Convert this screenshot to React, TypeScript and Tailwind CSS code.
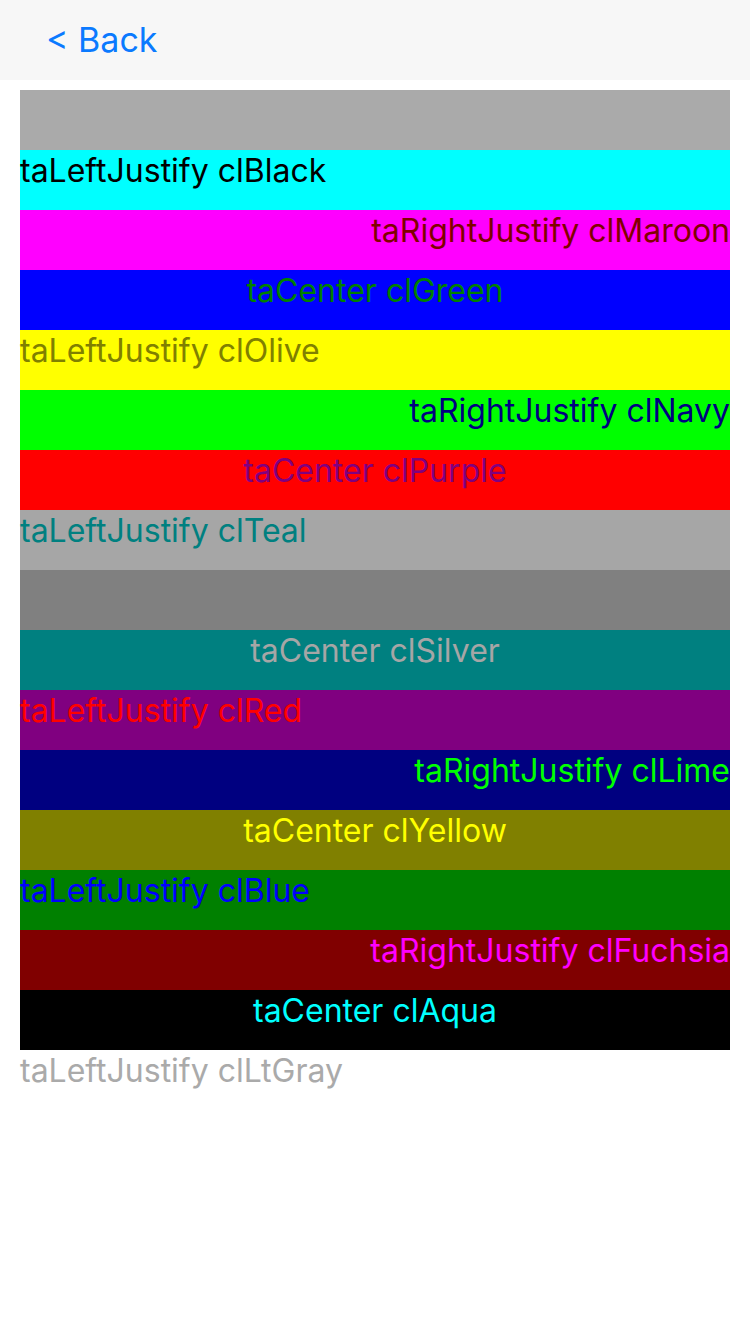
const rows: { bg: string; fg: string; align: string; text: string }[] = [
  { bg: 'bg-[#aaaaaa]', fg: 'text-[#aaaaaa]', align: 'text-left', text: '' },
  { bg: 'bg-[#00ffff]', fg: 'text-[#000000]', align: 'text-left', text: 'taLeftJustify clBlack' },
  { bg: 'bg-[#ff00ff]', fg: 'text-[#800000]', align: 'text-right', text: 'taRightJustify clMaroon' },
  { bg: 'bg-[#0000ff]', fg: 'text-[#008000]', align: 'text-center', text: 'taCenter clGreen' },
  { bg: 'bg-[#ffff00]', fg: 'text-[#808000]', align: 'text-left', text: 'taLeftJustify clOlive' },
  { bg: 'bg-[#00ff00]', fg: 'text-[#000080]', align: 'text-right', text: 'taRightJustify clNavy' },
  { bg: 'bg-[#ff0000]', fg: 'text-[#800080]', align: 'text-center', text: 'taCenter clPurple' },
  { bg: 'bg-[#a6a6a6]', fg: 'text-[#008080]', align: 'text-left', text: 'taLeftJustify clTeal' },
  { bg: 'bg-[#808080]', fg: 'text-[#808080]', align: 'text-right', text: '' },
  { bg: 'bg-[#008080]', fg: 'text-[#a6a6a6]', align: 'text-center', text: 'taCenter clSilver' },
  { bg: 'bg-[#800080]', fg: 'text-[#ff0000]', align: 'text-left', text: 'taLeftJustify clRed' },
  { bg: 'bg-[#000080]', fg: 'text-[#00ff00]', align: 'text-right', text: 'taRightJustify clLime' },
  { bg: 'bg-[#808000]', fg: 'text-[#ffff00]', align: 'text-center', text: 'taCenter clYellow' },
  { bg: 'bg-[#008000]', fg: 'text-[#0000ff]', align: 'text-left', text: 'taLeftJustify clBlue' },
  { bg: 'bg-[#800000]', fg: 'text-[#ff00ff]', align: 'text-right', text: 'taRightJustify clFuchsia' },
  { bg: 'bg-[#000000]', fg: 'text-[#00ffff]', align: 'text-center', text: 'taCenter clAqua' },
  { bg: 'bg-white', fg: 'text-[#aaaaaa]', align: 'text-left', text: 'taLeftJustify clLtGray' },
];

export default function App() {
  return (
    <div className="w-[750px] h-[1334px] bg-white font-['Inter',sans-serif]">
      {/* Nav bar */}
      <div className="h-[80px] bg-[#f7f7f7] flex items-center pl-[46px]">
        <span className="text-[34px] text-[#0a7aff] leading-none">&lt; Back</span>
      </div>

      {/* Labels */}
      <div className="px-[20px] pt-[10px]">
        {rows.map((row, index) => (
          <div key={index} className={`h-[60px] ${row.bg}`}>
            <div className={`text-[32px] leading-[41px] whitespace-nowrap ${row.fg} ${row.align}`}>
              {row.text}
            </div>
          </div>
        ))}
      </div>
    </div>
  );
}
